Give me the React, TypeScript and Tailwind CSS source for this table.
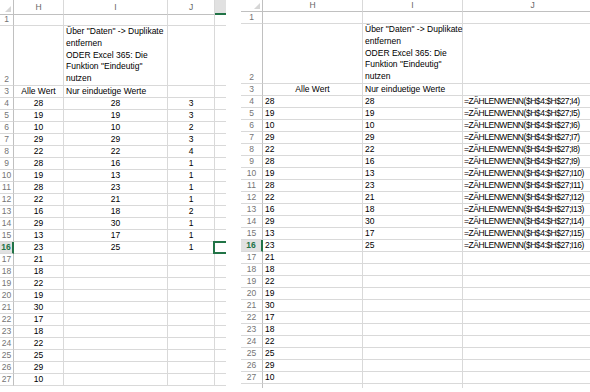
import React from "react";

const H_VALUES = [28, 19, 10, 29, 22, 28, 19, 28, 22, 16, 29, 13, 23, 21, 18, 22, 19, 30, 17, 18, 22, 25, 29, 10];
const I_VALUES = [28, 19, 10, 29, 22, 16, 13, 23, 21, 18, 30, 17, 25];
const J_COUNTS = [3, 3, 2, 3, 4, 1, 1, 1, 1, 2, 1, 1, 1];

const NOTE_LINES = ['Über "Daten" -> Duplikate', "entfernen", "ODER Excel 365: Die", 'Funktion "Eindeutig"', "nutzen"];

const SELECTED_ROW = 16;

function CornerMark() {
  return (
    <svg width="6" height="6" viewBox="0 0 6 6" className="absolute right-[2px] bottom-[2px]">
      <polygon points="6,0 6,6 0,6" fill="#d6d6d6" />
    </svg>
  );
}

type RowNumProps = { n: number; w: string; hideLabel?: boolean };

function RowNum({ n, w, hideLabel }: RowNumProps) {
  const sel = n === SELECTED_ROW;
  return (
    <div
      className={
        sel
          ? `${w} h-full shrink-0 flex items-end justify-center leading-[11px] bg-[#e1e1e1] text-[#217346] font-bold border-b border-[#d9d9d9] border-r-2 border-r-[#217346]`
          : `${w} h-full shrink-0 flex items-end justify-center leading-[11px] text-[#747474] border-b border-[#d9d9d9] border-r border-r-[#c0c0c0]`
      }
    >
      {hideLabel ? null : n}
    </div>
  );
}

/* ---------- left sheet: plain values, centred ---------- */

function LeftSheet() {
  const rows = Array.from({ length: 25 }, (_, k) => k + 3);
  return (
    <div className="w-[226px] h-[387px] shrink-0 flex flex-col overflow-hidden">
      {/* column headers */}
      <div className="flex h-[15px] shrink-0">
        <div className="relative w-[14px] h-full shrink-0 border-r border-b border-[#c0c0c0]">
          <CornerMark />
        </div>
        <div className="w-[50px] h-full shrink-0 flex items-center justify-center text-[#666] border-r border-b border-[#c0c0c0] border-r-[#d9d9d9]">H</div>
        <div className="w-[104px] h-full shrink-0 flex items-center justify-center text-[#666] border-r border-b border-[#c0c0c0] border-r-[#d9d9d9]">I</div>
        <div className="w-[47px] h-full shrink-0 flex items-center justify-center text-[#666] border-r border-b border-[#c0c0c0] border-r-[#d9d9d9]">J</div>
        <div className="w-[11px] h-full shrink-0 bg-[#e1e1e1] border-b-2 border-[#217346]" />
      </div>

      {/* row 1 */}
      <div className="flex h-[11px] shrink-0">
        <RowNum n={1} w="w-[14px]" />
        <div className="w-[50px] h-full shrink-0 border-r border-b border-[#d9d9d9]" />
        <div className="w-[104px] h-full shrink-0 border-r border-b border-[#d9d9d9]" />
        <div className="w-[47px] h-full shrink-0 border-r border-b border-[#d9d9d9]" />
        <div className="w-[11px] h-full shrink-0 border-b border-[#d9d9d9]" />
      </div>

      {/* row 2: note */}
      <div className="flex h-[60px] shrink-0">
        <RowNum n={2} w="w-[14px]" />
        <div className="w-[50px] h-full shrink-0 border-r border-b border-[#d9d9d9]" />
        <div className="w-[104px] h-full shrink-0 border-r border-b border-[#d9d9d9] flex flex-col justify-end pl-[2px] leading-[11.8px] text-black whitespace-nowrap">
          {NOTE_LINES.map((l) => (
            <span key={l}>{l}</span>
          ))}
        </div>
        <div className="w-[47px] h-full shrink-0 border-r border-b border-[#d9d9d9]" />
        <div className="w-[11px] h-full shrink-0 border-b border-[#d9d9d9]" />
      </div>

      {rows.map((r) => {
        const idx = r - 4;
        const h = r === 3 ? "Alle Wert" : String(H_VALUES[idx]);
        const i = r === 3 ? "Nur einduetige Werte" : idx < I_VALUES.length ? String(I_VALUES[idx]) : "";
        const j = r >= 4 && idx < J_COUNTS.length ? String(J_COUNTS[idx]) : "";
        return (
          <div key={r} className="relative flex h-[12px] shrink-0">
            <RowNum n={r} w="w-[14px]" />
            <div className="w-[50px] h-full shrink-0 border-r border-b border-[#d9d9d9] flex items-end justify-center leading-[11px] text-black">{h}</div>
            <div
              className={
                r === 3
                  ? "w-[104px] h-full shrink-0 border-r border-b border-[#d9d9d9] flex items-end justify-start pl-[2px] leading-[11px] text-black whitespace-nowrap"
                  : "w-[104px] h-full shrink-0 border-r border-b border-[#d9d9d9] flex items-end justify-center leading-[11px] text-black"
              }
            >
              {i}
            </div>
            <div className="w-[47px] h-full shrink-0 border-r border-b border-[#d9d9d9] flex items-end justify-center leading-[11px] text-black">{j}</div>
            <div className="w-[11px] h-full shrink-0 border-b border-[#d9d9d9]" />
            {r === SELECTED_ROW && (
              <div className="absolute left-[213px] top-[-1px] w-[13px] h-[13px] border-l-2 border-t-2 border-b-2 border-[#217346]" />
            )}
          </div>
        );
      })}
    </div>
  );
}

/* ---------- right sheet: formulas shown, left aligned ---------- */

function RightSheet() {
  const rows = Array.from({ length: 26 }, (_, k) => k + 3);
  return (
    <div className="w-[349px] h-[388px] shrink-0 flex flex-col overflow-hidden">
      {/* column headers */}
      <div className="flex h-[12px] shrink-0">
        <div className="relative w-[22px] h-full shrink-0 border-r border-b border-[#c0c0c0]">
          <CornerMark />
        </div>
        <div className="w-[100px] h-full shrink-0 flex items-center justify-center text-[#666] border-r border-b border-[#c0c0c0] border-r-[#d9d9d9]">H</div>
        <div className="w-[100px] h-full shrink-0 flex items-center justify-center text-[#666] border-r border-b border-[#c0c0c0] border-r-[#d9d9d9]">I</div>
        <div className="w-[140px] h-full shrink-0 flex items-center justify-center text-[#666] border-r border-b border-[#c0c0c0] border-r-[#d9d9d9]">J</div>
      </div>

      {/* row 1 */}
      <div className="flex h-[12px] shrink-0">
        <RowNum n={1} w="w-[22px]" />
        <div className="w-[100px] h-full shrink-0 border-r border-b border-[#d9d9d9]" />
        <div className="w-[100px] h-full shrink-0 border-r border-b border-[#d9d9d9]" />
        <div className="w-[140px] h-full shrink-0 border-r border-b border-[#d9d9d9]" />
      </div>

      {/* row 2: note */}
      <div className="flex h-[60px] shrink-0">
        <RowNum n={2} w="w-[22px]" />
        <div className="w-[100px] h-full shrink-0 border-r border-b border-[#d9d9d9]" />
        <div className="w-[100px] h-full shrink-0 border-r border-b border-[#d9d9d9] flex flex-col justify-end pl-[2px] leading-[11.8px] text-black whitespace-nowrap">
          {NOTE_LINES.map((l) => (
            <span key={l}>{l}</span>
          ))}
        </div>
        <div className="w-[140px] h-full shrink-0 border-r border-b border-[#d9d9d9]" />
      </div>

      {rows.map((r) => {
        const idx = r - 4;
        const h = r === 3 ? "Alle Wert" : r <= 27 ? String(H_VALUES[idx]) : "";
        const i = r === 3 ? "Nur einduetige Werte" : idx < I_VALUES.length ? String(I_VALUES[idx]) : "";
        const j = r >= 4 && idx < I_VALUES.length ? `=ZÄHLENWENN($H$4:$H$27;I${r})` : "";
        return (
          <div key={r} className="flex h-[12px] shrink-0">
            <RowNum n={r} w="w-[22px]" hideLabel={r > 27} />
            <div
              className={
                r === 3
                  ? "w-[100px] h-full shrink-0 border-r border-b border-[#d9d9d9] flex items-end justify-center leading-[11px] text-black"
                  : "w-[100px] h-full shrink-0 border-r border-b border-[#d9d9d9] flex items-end pl-[2px] leading-[11px] text-black"
              }
            >
              {h}
            </div>
            <div className="w-[100px] h-full shrink-0 border-r border-b border-[#d9d9d9] flex items-end pl-[2px] leading-[11px] text-black whitespace-nowrap">{i}</div>
            <div className="w-[140px] h-full shrink-0 border-r border-b border-[#d9d9d9] flex items-end pl-[1px] leading-[11px] text-black whitespace-nowrap tracking-[-0.45px]">
              {j}
            </div>
          </div>
        );
      })}
    </div>
  );
}

export default function App() {
  return (
    <div className="w-[590px] h-[392px] bg-white overflow-hidden flex items-start font-['Liberation_Sans',Arial,sans-serif] text-[8.5px] antialiased">
      <LeftSheet />
      <div className="w-[15px] shrink-0" />
      <RightSheet />
    </div>
  );
}
